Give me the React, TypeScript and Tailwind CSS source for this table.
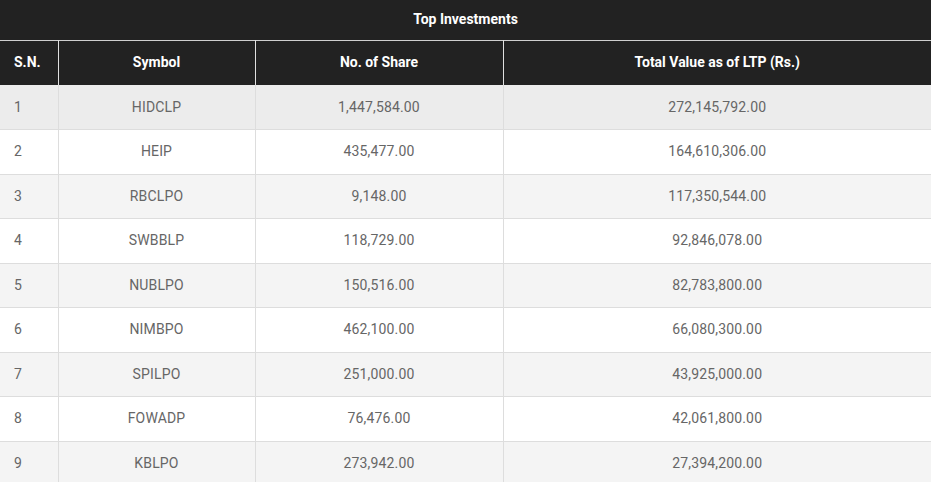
const rows = [
  { sn: 1, symbol: "HIDCLP", shares: "1,447,584.00", value: "272,145,792.00" },
  { sn: 2, symbol: "HEIP", shares: "435,477.00", value: "164,610,306.00" },
  { sn: 3, symbol: "RBCLPO", shares: "9,148.00", value: "117,350,544.00" },
  { sn: 4, symbol: "SWBBLP", shares: "118,729.00", value: "92,846,078.00" },
  { sn: 5, symbol: "NUBLPO", shares: "150,516.00", value: "82,783,800.00" },
  { sn: 6, symbol: "NIMBPO", shares: "462,100.00", value: "66,080,300.00" },
  { sn: 7, symbol: "SPILPO", shares: "251,000.00", value: "43,925,000.00" },
  { sn: 8, symbol: "FOWADP", shares: "76,476.00", value: "42,061,800.00" },
  { sn: 9, symbol: "KBLPO", shares: "273,942.00", value: "27,394,200.00" },
];

export default function App() {
  return (
    <div className="w-[931px] h-[482px] overflow-hidden bg-white font-['Roboto',sans-serif]">
      <table className="w-full border-collapse table-fixed">
        <colgroup>
          <col className="w-[58px]" />
          <col className="w-[197px]" />
          <col className="w-[248px]" />
          <col />
        </colgroup>
        <thead>
          <tr className="bg-[#222222] h-[40px]">
            <th colSpan={4} className="text-white text-[14px] font-bold text-center">
              Top Investments
            </th>
          </tr>
          <tr className="bg-[#222222] h-[45px] border-t border-[#cfcfcf] text-white text-[14px] font-bold">
            <th className="text-left pl-[14px]">S.N.</th>
            <th className="text-center border-l border-[#e0e0e0]">Symbol</th>
            <th className="text-center border-l border-[#e0e0e0]">No. of Share</th>
            <th className="text-center border-l border-[#e0e0e0]">Total Value as of LTP (Rs.)</th>
          </tr>
        </thead>
        <tbody className="text-[14px] text-[#666666] tracking-[0.15px]">
          {rows.map((r, i) => (
            <tr
              key={r.sn}
              className={`h-[44.5px] border-b border-[#dddddd] ${
                i === 0 ? "bg-[#ececec]" : i % 2 === 0 ? "bg-[#f4f4f4]" : "bg-white"
              }`}
            >
              <td className="pl-[14px] text-left">{r.sn}</td>
              <td className="text-center border-l border-[#dddddd]">{r.symbol}</td>
              <td className="text-center border-l border-[#dddddd]">{r.shares}</td>
              <td className="text-center border-l border-[#dddddd]">{r.value}</td>
            </tr>
          ))}
        </tbody>
      </table>
    </div>
  );
}
